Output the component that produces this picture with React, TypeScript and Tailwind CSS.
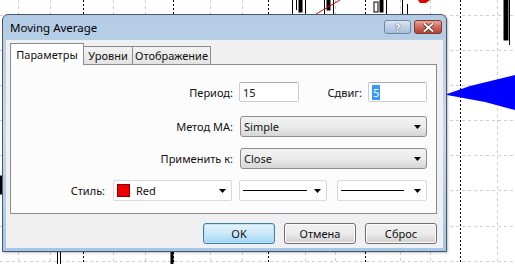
import React from "react";

const hLines = [15, 50, 85, 120, 155, 190, 226, 261];
const lightV = [18, 50, 113, 145, 210, 242, 305, 335, 400, 430, 497];
const darkV = [83, 173, 268, 365, 460];

function Chart() {
  return (
    <svg className="absolute inset-0" width="515" height="264" viewBox="0 0 515 264">
      <rect width="515" height="264" fill="#ffffff" />
      {hLines.map((y) => (
        <line key={`h${y}`} x1="0" x2="515" y1={y + 0.5} y2={y + 0.5} stroke="#cfcfcf" strokeDasharray="3 3" />
      ))}
      {lightV.map((x) => (
        <line key={`v${x}`} x1={x + 0.5} x2={x + 0.5} y1="0" y2="264" stroke="#cfcfcf" strokeDasharray="3 3" />
      ))}
      {darkV.map((x) => (
        <line key={`d${x}`} x1={x + 0.5} x2={x + 0.5} y1="0" y2="264" stroke="#000" strokeDasharray="2 2" />
      ))}
      {/* candles along the top */}
      <g stroke="#000" strokeWidth="1">
        <line x1="292.5" x2="292.5" y1="0" y2="14" />
        <line x1="296.5" x2="296.5" y1="0" y2="10" />
        <rect x="299" y="0" width="3" height="12" fill="#000" />
        <line x1="305.5" x2="305.5" y1="0" y2="14" />
        <line x1="324.5" x2="324.5" y1="0" y2="14" />
        <rect x="327" y="0" width="3" height="10" fill="#000" />
        <line x1="333.5" x2="333.5" y1="0" y2="14" />
        <rect x="374" y="2" width="4" height="10" fill="#fff" />
        <rect x="380" y="0" width="3" height="12" fill="#000" />
        <line x1="386.5" x2="386.5" y1="0" y2="14" />
        <line x1="402.5" x2="402.5" y1="0" y2="14" />
        <line x1="407.5" x2="407.5" y1="4" y2="14" />
        <rect x="504" y="0" width="4" height="40" fill="#000" />
        <line x1="509.5" x2="509.5" y1="0" y2="45" />
        <rect x="0" y="176" width="2" height="18" fill="#000" />
        <line x1="57.5" x2="57.5" y1="250" y2="264" />
        <line x1="60.5" x2="60.5" y1="250" y2="264" />
        <rect x="171" y="250" width="2" height="14" fill="#000" />
      </g>
      <line x1="316" y1="14" x2="340" y2="0" stroke="#e00000" strokeWidth="1" />
      <path d="M418 0 L430 0 L426 3 L420 3 Z" fill="#e00000" />
      {/* blue wedge */}
      <polygon points="447,94 470,86 515,75 515,110 485,102 447,95" fill="#0000ff" />
      <line x1="447" y1="94.5" x2="456" y2="94.5" stroke="#0000ff" />
    </svg>
  );
}

function Arrow() {
  return (
    <svg width="7" height="4" viewBox="0 0 7 4" className="shrink-0">
      <path d="M0 0 H7 L3.5 4 Z" fill="#000" />
    </svg>
  );
}

function TextBox({ w, children }: { w: string; children: React.ReactNode }) {
  return (
    <div
      className={`${w} h-[20px] flex items-center rounded-[2px] border border-[#c9ccd1] border-t-[#abadb3] bg-white pl-[3px]`}
    >
      {children}
    </div>
  );
}

function DropList({ value }: { value: string }) {
  return (
    <div className="ml-[7px] w-[187px] h-[21px] flex items-center justify-between rounded-[3px] border border-[#8d8d8d] bg-gradient-to-b from-[#f3f3f3] via-[#ebebeb] to-[#d6d6d6] pl-[3px] pr-[5px]">
      <span>{value}</span>
      <Arrow />
    </div>
  );
}

function FlatCombo({ w, ml, children }: { w: string; ml: string; children: React.ReactNode }) {
  return (
    <div className={`${w} ${ml} h-[21px] flex items-center rounded-[2px] border border-[#d9d9d9] bg-white pl-[3px] pr-[5px]`}>
      {children}
    </div>
  );
}

function Button({ label, primary }: { label: string; primary?: boolean }) {
  return (
    <div
      className={`w-[72px] h-[21px] flex items-center justify-center rounded-[3px] border ${
        primary
          ? "border-[#3c7fb1] bg-gradient-to-b from-[#e5f4fc] via-[#cbe9f9] to-[#9fd5f2] shadow-[inset_0_0_0_1px_#b9e4fb]"
          : "border-[#707070] bg-gradient-to-b from-[#f2f2f2] via-[#ebebeb] to-[#cfcfcf] shadow-[inset_0_0_0_1px_#fcfcfc]"
      }`}
    >
      {label}
    </div>
  );
}

export default function App() {
  return (
    <div className="relative w-[515px] h-[264px] overflow-hidden bg-white font-['Noto_Sans','Open_Sans',sans-serif] text-[11px] leading-none text-[#111]">
      <Chart />

      {/* dialog window */}
      <div className="absolute left-[2px] top-[14px] w-[445px] h-[238px] flex flex-col rounded-t-[6px] border border-[#4d5866] bg-gradient-to-b from-[#b3cbe5] via-[#c6d9ee] to-[#a4c6e8] px-[3px] pb-[3px] shadow-[1px_1px_2px_rgba(0,0,0,0.25)]">
        <div className="h-[25px] flex items-start justify-between pl-[4px] pr-[1px]">
          <span className="mt-[7px] text-[11.5px] text-black">Moving Average</span>
          <div className="mt-[5px] flex gap-[3px]">
            <div className="w-[27px] h-[14px] flex items-center justify-center rounded-[3px] border border-[#6f86a3] bg-gradient-to-b from-[#dce7f3] via-[#bccfe4] to-[#a8c0dc]">
              <span className="text-[11px] font-bold text-white [text-shadow:0_0_1px_#3f5470,0_0_1px_#3f5470]">?</span>
            </div>
            <div className="w-[28px] h-[14px] flex items-center justify-center rounded-[3px] border border-[#7b3a33] bg-gradient-to-b from-[#e8a597] via-[#cf6a5a] to-[#b8402f]">
              <svg width="11" height="9" viewBox="0 0 11 9">
                <path d="M1.5 1 L9.5 8 M9.5 1 L1.5 8" stroke="#5a2019" strokeWidth="3.4" strokeLinecap="square" />
                <path d="M1.5 1 L9.5 8 M9.5 1 L1.5 8" stroke="#ffffff" strokeWidth="2" strokeLinecap="square" />
              </svg>
            </div>
          </div>
        </div>

        <div className="flex-1 flex flex-col bg-[#f0f0f0]">
          {/* tabs */}
          <div className="h-[24px] flex items-end pl-[4px] pt-[3px]">
            <div className="relative z-10 -mb-px w-[74px] h-[22px] flex items-center justify-center border border-b-0 border-[#898c95] bg-white">
              Параметры
            </div>
            <div className="w-[49px] h-[18px] flex items-center justify-center border border-l-0 border-b-0 border-[#898c95] bg-gradient-to-b from-[#f3f3f3] to-[#e3e3e3]">
              Уровни
            </div>
            <div className="w-[78px] h-[18px] flex items-center justify-center border border-l-0 border-b-0 border-[#898c95] bg-gradient-to-b from-[#f3f3f3] to-[#e3e3e3]">
              Отображение
            </div>
          </div>

          {/* tab page */}
          <div className="ml-[4px] w-[427px] h-[150px] flex flex-col border border-[#898c95] bg-[#fcfcfc] pt-[17px]">
            <div className="flex items-center h-[20px]">
              <span className="w-[222px] text-right">Период:</span>
              <div className="ml-[6px]">
                <TextBox w="w-[60px]">15</TextBox>
              </div>
              <span className="ml-[10px] w-[53px] text-right">Сдвиг:</span>
              <div className="ml-[6px]">
                <TextBox w="w-[59px]">
                  <span className="bg-[#3399ff] px-[1px] py-[2px] text-white">5</span>
                </TextBox>
              </div>
            </div>

            <div className="mt-[14px] flex items-center">
              <span className="w-[222px] text-right">Метод МА:</span>
              <DropList value="Simple" />
            </div>

            <div className="mt-[11px] flex items-center">
              <span className="w-[222px] text-right">Применить к:</span>
              <DropList value="Close" />
            </div>

            <div className="mt-[11px] flex items-center">
              <span className="w-[94px] text-right">Стиль:</span>
              <FlatCombo w="w-[119px]" ml="ml-[8px]">
                <span className="w-[13px] h-[13px] shrink-0 border border-[#8a0000] bg-[#ee0000]" />
                <span className="ml-[6px] flex-1">Red</span>
                <Arrow />
              </FlatCombo>
              <FlatCombo w="w-[88px]" ml="ml-[7px]">
                <span className="h-px w-[64px] bg-black" />
                <span className="flex-1" />
                <Arrow />
              </FlatCombo>
              <FlatCombo w="w-[90px]" ml="ml-[10px]">
                <span className="h-px w-[63px] bg-black" />
                <span className="flex-1" />
                <Arrow />
              </FlatCombo>
            </div>
          </div>

          {/* buttons */}
          <div className="mt-[9px] flex justify-end gap-[9px] pr-[6px]">
            <Button label="OK" primary />
            <Button label="Отмена" />
            <Button label="Сброс" />
          </div>
        </div>
      </div>
    </div>
  );
}
